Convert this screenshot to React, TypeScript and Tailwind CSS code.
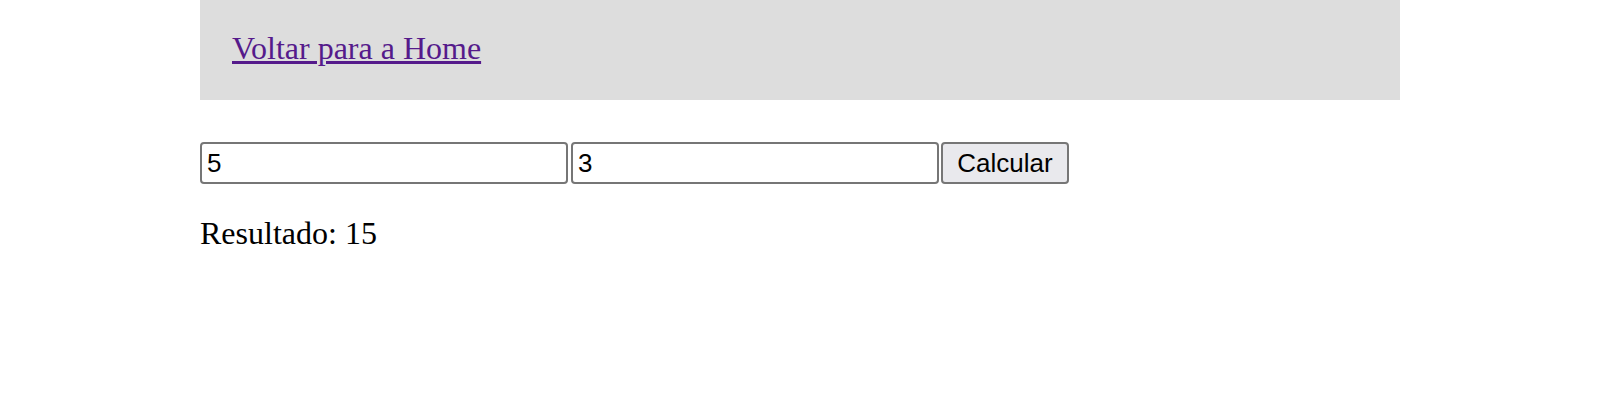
import React from "react";

export default function App() {
  return (
    <div className="w-[1200px] mx-auto bg-white">
      <div className="h-[100px] bg-[#dddddd] px-8 pb-[4px] flex items-center font-['Liberation_Serif',serif]">
        <a href="#" className="text-[32px] leading-[37px] text-[#551a8b] underline">
          Voltar para a Home
        </a>
      </div>
      <div className="mt-[42px] flex items-start">
        <input
          defaultValue="5"
          className="w-[368px] h-[42px] border-2 border-[#767676] rounded-[4px] pl-[5px] pr-[4px] text-[26px] text-black font-['Liberation_Sans',sans-serif] bg-white outline-none"
        />
        <input
          defaultValue="3"
          className="ml-[3px] w-[368px] h-[42px] border-2 border-[#767676] rounded-[4px] pl-[5px] pr-[4px] text-[26px] text-black font-['Liberation_Sans',sans-serif] bg-white outline-none"
        />
        <button className="ml-[2px] w-[128px] h-[42px] border-2 border-[#767676] rounded-[4px] bg-[#e9e9ed] text-[26px] text-black font-['Liberation_Sans',sans-serif] flex items-center justify-center">
          Calcular
        </button>
      </div>
      <p className="mt-[31px] text-[32px] leading-[37px] text-black font-['Liberation_Serif',serif]">
        Resultado: 15
      </p>
    </div>
  );
}
